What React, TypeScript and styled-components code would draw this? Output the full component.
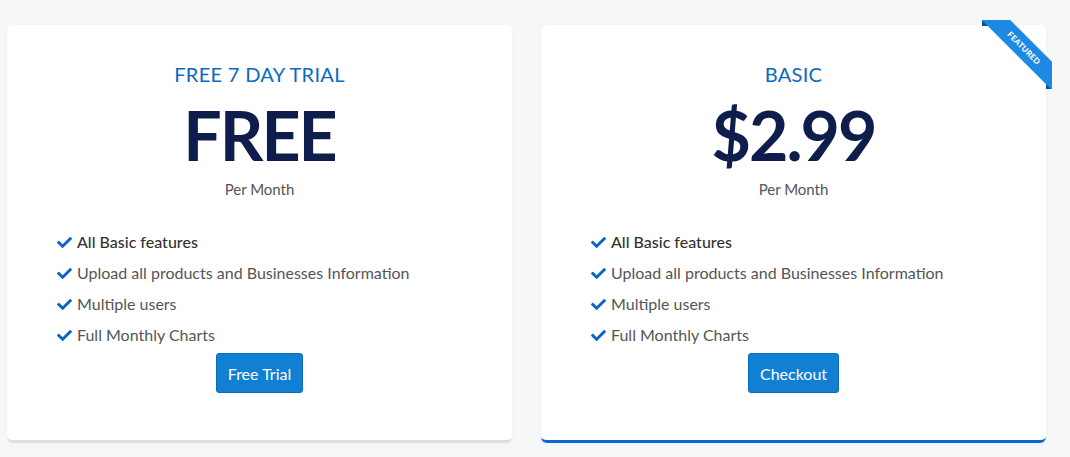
import styled, { createGlobalStyle } from 'styled-components';
import { FaCheck } from 'react-icons/fa';

const GlobalStyle = createGlobalStyle`
  body {
    margin: 0;
    background: #f6f7f9;
    font-family: Lato, "Open Sans", sans-serif;
  }
`;

const Page = styled.div`
  display: grid;
  grid-template-columns: 505px 505px;
  gap: 29px;
  padding: 25px 7px;
`;

const Card = styled.div<{ featured?: boolean }>`
  position: relative;
  background: #fff;
  border-radius: 6px;
  height: 418px;
  box-sizing: border-box;
  padding-top: 37px;
  text-align: center;
  border-bottom: 3px solid ${({ featured }) => (featured ? '#0b68d2' : '#dedfe1')};
  box-shadow: 0 1px 6px rgba(0, 0, 0, 0.03);
`;

const Title = styled.h3`
  margin: 0;
  font-size: 20px;
  line-height: 24px;
  font-weight: 400;
  color: #0a6abf;
  letter-spacing: 0.3px;
`;

const Price = styled.div`
  margin-top: 15px;
  font-size: 68px;
  line-height: 68px;
  font-weight: 700;
  letter-spacing: -2px;
  color: #0f1d4d;
`;

const Period = styled.div`
  margin-top: 10px;
  font-size: 15px;
  line-height: 20px;
  color: #555;
`;

const Features = styled.ul`
  list-style: none;
  margin: 27px 0 0;
  padding: 0 0 0 50px;
  text-align: left;
`;

const Feature = styled.li<{ strong?: boolean }>`
  display: flex;
  align-items: center;
  gap: 5px;
  height: 31px;
  font-size: 16px;
  color: ${({ strong }) => (strong ? '#333' : '#555')};
  font-weight: ${({ strong }) => (strong ? 500 : 400)};

  svg {
    color: #0b63c9;
    font-size: 15px;
    margin-top: 2px;
    flex: none;
  }
`;

const Button = styled.button`
  margin-top: 3px;
  height: 40px;
  padding: 0 11px;
  background: #1180d2;
  border: 1px solid #0b6cb8;
  border-radius: 3px;
  color: #fff;
  font-family: inherit;
  font-size: 16px;
`;

const Ribbon = styled.div`
  position: absolute;
  top: -5px;
  right: -6px;
  width: 70px;
  height: 69px;
  overflow: hidden;
  z-index: 1;

  &::before,
  &::after {
    content: '';
    position: absolute;
    z-index: -1;
    border: 3px solid #0b4f99;
  }
  &::before {
    top: 0;
    left: 0;
  }
  &::after {
    bottom: 0;
    right: 0;
  }

  span {
    position: absolute;
    left: -8px;
    top: 18px;
    width: 100px;
    height: 20px;
    line-height: 20px;
    transform: rotate(45deg);
    background: #1e88e5;
    color: #fff;
    font-size: 8px;
    font-weight: 900;
    letter-spacing: 0.2px;
    text-align: center;
    text-transform: uppercase;
  }
`;

const items = [
  'All Basic features',
  'Upload all products and Businesses Information',
  'Multiple users',
  'Full Monthly Charts',
];

type Plan = { title: string; price: string; action: string; featured?: boolean };

const plans: Plan[] = [
  { title: 'FREE 7 DAY TRIAL', price: 'FREE', action: 'Free Trial' },
  { title: 'BASIC', price: '$2.99', action: 'Checkout', featured: true },
];

export default function App() {
  return (
    <>
      <GlobalStyle />
      <Page>
        {plans.map((p) => (
          <Card key={p.title} featured={p.featured}>
            {p.featured && (
              <Ribbon>
                <span>Featured</span>
              </Ribbon>
            )}
            <Title>{p.title}</Title>
            <Price>{p.price}</Price>
            <Period>Per Month</Period>
            <Features>
              {items.map((it, i) => (
                <Feature key={it} strong={i === 0}>
                  <FaCheck />
                  {it}
                </Feature>
              ))}
            </Features>
            <Button>{p.action}</Button>
          </Card>
        ))}
      </Page>
    </>
  );
}
